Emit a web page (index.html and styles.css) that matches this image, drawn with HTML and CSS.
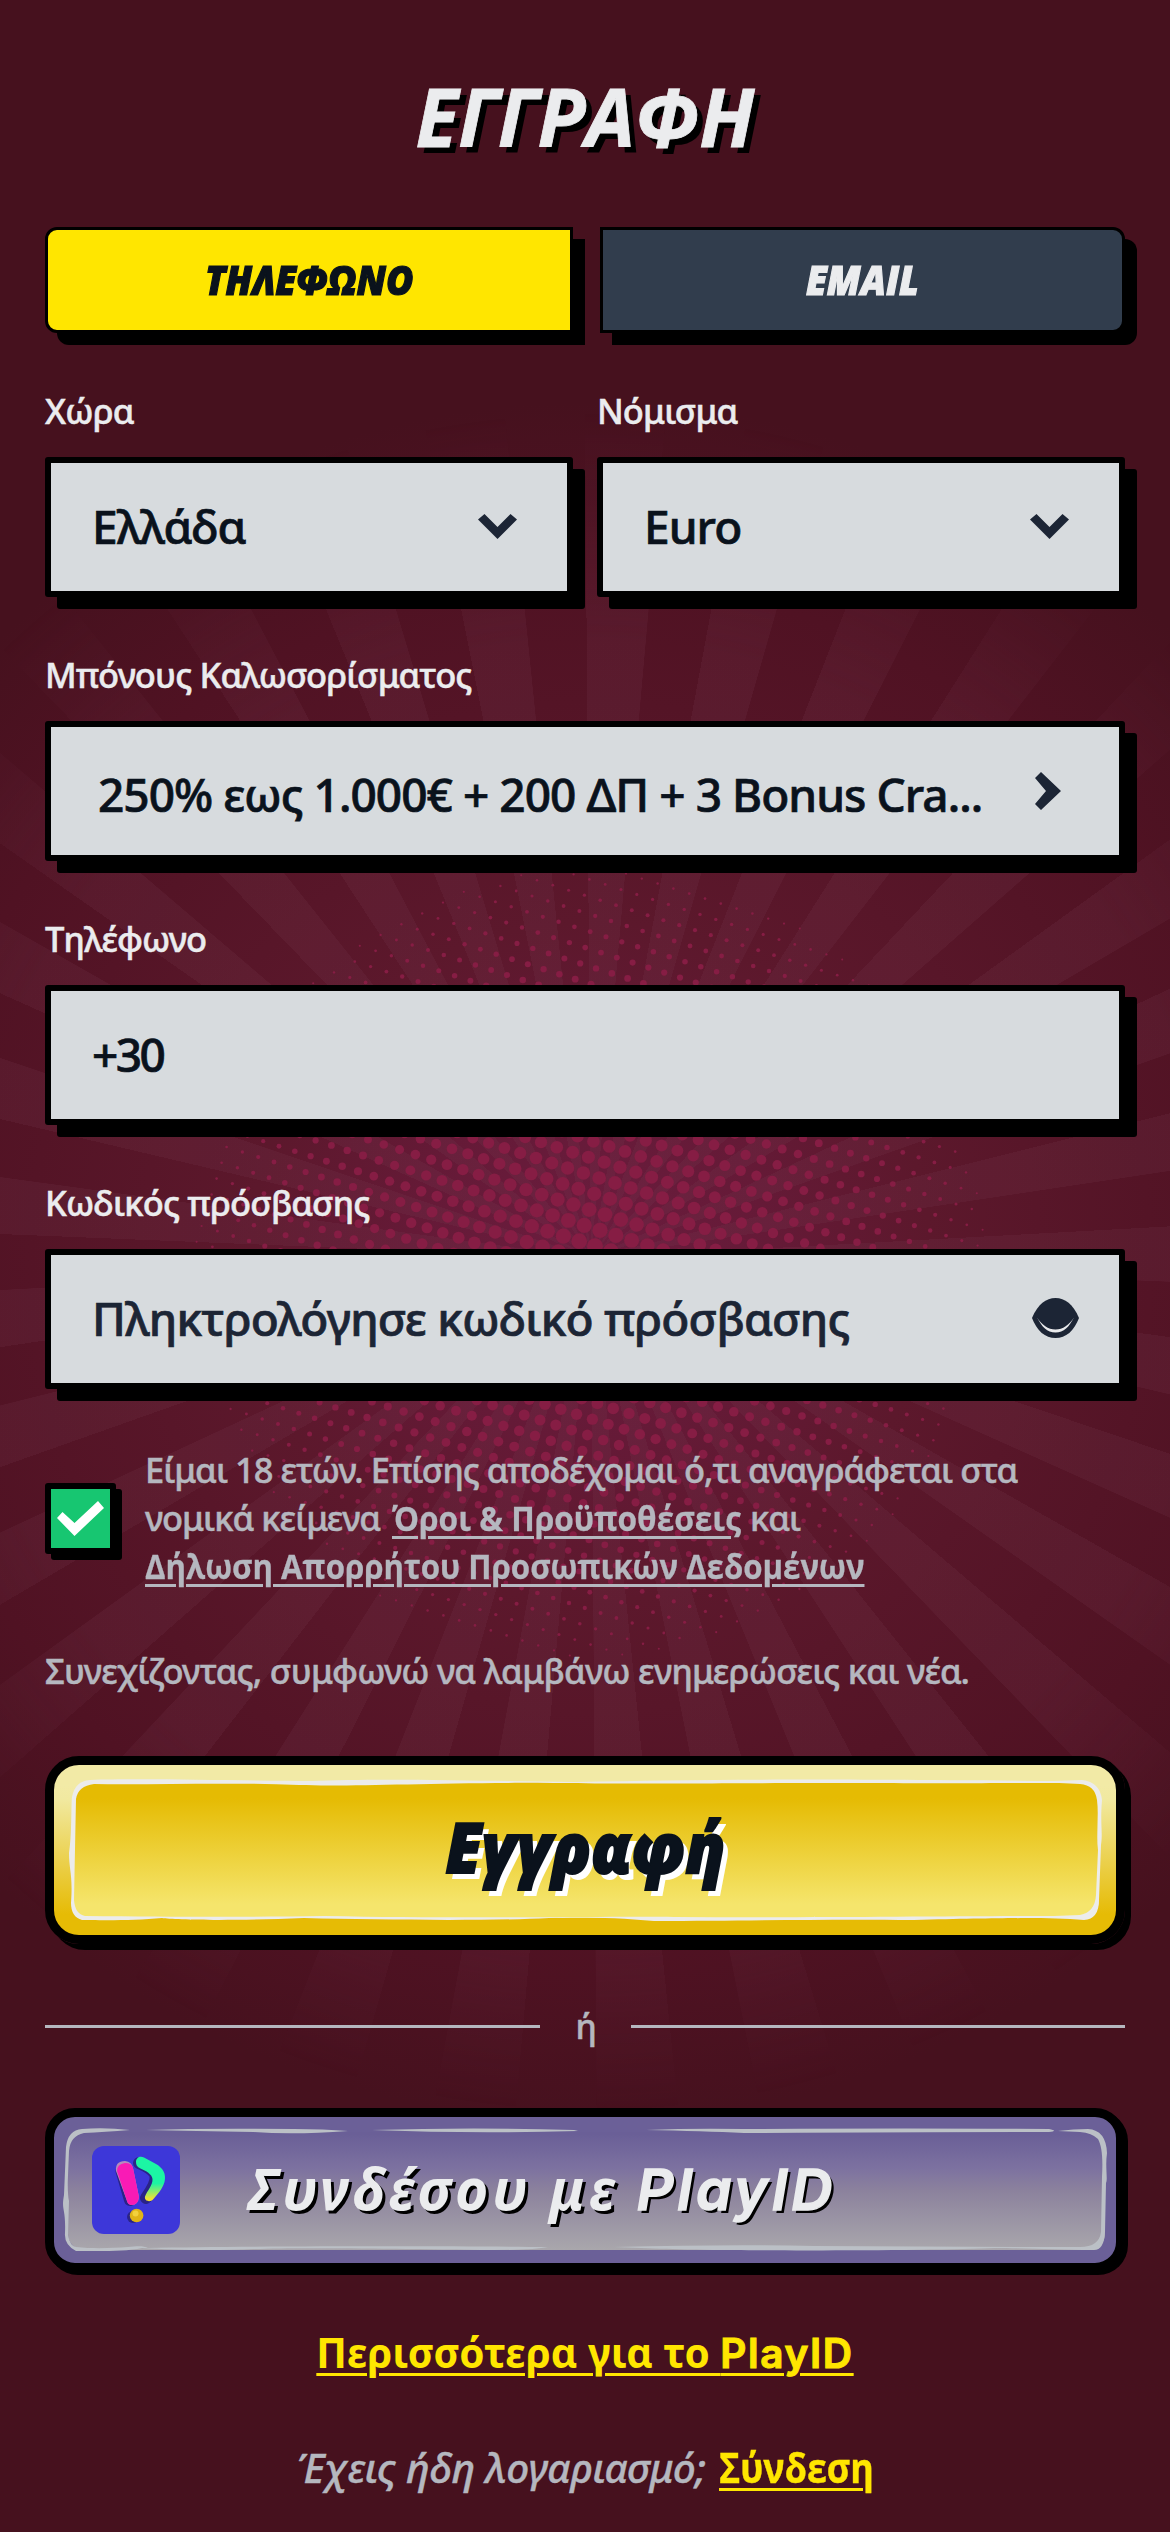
FILE: index.html
```html
<!DOCTYPE html>
<html lang="el">
<head>
<meta charset="utf-8">
<title>Εγγραφή</title>
<link rel="stylesheet" href="styles.css">
</head>
<body>
<div class="backdrop"><div class="rays"></div><svg class="dots" viewBox="-420 -420 840 840"></svg></div>
<main class="page">
  <h1 class="title">ΕΓΓΡΑΦΗ</h1>
  <div class="tabs">
    <button class="tab tab-active"><span class="tab-text">ΤΗΛΕΦΩΝΟ</span></button>
    <button class="tab"><span class="tab-text">EMAIL</span></button>
  </div>
  <div class="pair">
    <div class="field">
      <label class="label">Χώρα</label>
      <div class="box"><span>Ελλάδα</span>
        <svg class="chev-down" viewBox="0 0 39 25"><path d="M0 5.500 6.500 0 19.500 13 32.500 0 39 5.500 19.500 25Z"/></svg></div>
    </div>
    <div class="field">
      <label class="label">Νόμισμα</label>
      <div class="box"><span>Euro</span>
        <svg class="chev-down" viewBox="0 0 39 25"><path d="M0 5.500 6.500 0 19.500 13 32.500 0 39 5.500 19.500 25Z"/></svg></div>
    </div>
  </div>
  <div class="field">
    <label class="label">Μπόνους Καλωσορίσματος</label>
    <div class="box box-bonus"><span>250% εως 1.000€ + 200 ΔΠ + 3 Bonus Cra...</span>
      <svg class="chev-right" viewBox="0 0 26 38"><path d="M0 6 6 0 26 19 6 38 0 32 11 19Z"/></svg></div>
  </div>
  <div class="field">
    <label class="label">Τηλέφωνο</label>
    <div class="box"><span class="dial">+30</span></div>
  </div>
  <div class="field">
    <label class="label">Κωδικός πρόσβασης</label>
    <div class="box"><span class="placeholder">Πληκτρολόγησε κωδικό πρόσβασης</span>
      <svg class="eye" viewBox="0 0 47 40"><path d="M0 20C6 6 14 0 23.500 0S41 6 47 20C42 33 34 40 23.500 40S5 33 0 20Z"/><path class="lid" d="M5 19.500C10 29 15 34.500 23.500 34.500S37 29 42 19.500C37 27 31 31.500 23.500 31.500S10 27 5 19.500Z"/></svg></div>
  </div>
  <div class="terms">
    <div class="check"><svg viewBox="0 0 47 35"><path d="M0 17 5.500 11 17.500 22 41 0 47 7 17.500 35Z"/></svg></div>
    <p class="terms-text">Είμαι 18 ετών. Επίσης αποδέχομαι ό,τι αναγράφεται στα<br>νομικά κείμενα <a class="link link-terms">Όροι &amp; Προϋποθέσεις</a> και<br><a class="link">Δήλωση Απορρήτου Προσωπικών Δεδομένων</a></p>
  </div>
  <p class="consent">Συνεχίζοντας, συμφωνώ να λαμβάνω ενημερώσεις και νέα.</p>
  <button class="submit">
    <svg class="frame" viewBox="0 0 1062 170">
      <defs><linearGradient id="gold" x1="0" y1="0" x2="0" y2="1"><stop offset=".12" stop-color="#e5bb03"/><stop offset=".9" stop-color="#f5e56c"/></linearGradient></defs>
      <rect x="19" y="17" width="1026" height="136" rx="17" fill="url(#gold)"/>
      <path class="brush" fill-rule="evenodd" d="M36 15C90 13 190 16 258 16C330 13 430 16 520 17C660 14 740 14 1000 16L1028 15Q1046 17 1048 35C1046 60 1049 66 1047 80L1045 135Q1045 154 1030 155C990 152 950 153 860 155C760 154 690 156 600 156C560 152 520 152 495 153C440 156 330 155 250 153C180 156 120 155 108 153C80 156 40 155 28 155Q17 152 17 138C19 110 15 105 15 88C18 70 17 40 18 32Q21 16 36 15ZM40 19Q24 21 22 34L20 135Q21 149 31 151C130 152 200 152 270 151C420 154 560 151 620 152C760 153 900 151 1000 151L1026 150Q1041 147 1042 130L1044 85C1042 70 1045 50 1043 35Q1041 20 1026 19C990 17 950 19 830 18C640 18 560 19 500 18C380 17 300 22 245 20C170 17 100 20 40 19Z"/>
    </svg>
    <span class="submit-text">Εγγραφή</span>
  </button>
  <div class="divider"><i></i><span>ή</span><i></i></div>
  <button class="playid">
    <svg class="frame" viewBox="0 0 1062 146">
      <defs><linearGradient id="mist" x1="0" y1="0" x2="0" y2="1"><stop offset=".02" stop-color="#6a5f97"/><stop offset=".3" stop-color="#7c71a0"/><stop offset=".5" stop-color="#8c829d"/><stop offset="1" stop-color="#a9a7ac"/></linearGradient></defs>
      <rect x="14" y="15" width="1037" height="118" rx="16" fill="url(#mist)"/>
      <path class="brush" d="M28 12Q50 10 76 13Q50 15 30 16Q16 19 15 34C14 60 13 75 15 84L14 118Q16 129 22 130C40 132 60 131 74 130C84 129 90 129 94 131C200 129 400 129 494 130Q480 133 440 133C340 132 250 130 200 132C160 134 120 133 88 131C70 135 40 134 22 134Q10 128 11 116C12 90 7 94 10 78L12 30Q14 13 28 12Z"/>
      <path class="brush" d="M92 13Q150 11 240 12Q270 12 294 14Q240 18 200 15Q140 14 92 13ZM318 13Q420 10 520 13L524 14Q420 17 318 13ZM592 13Q640 11 690 12 860 11 995 12 1005 14 995 15 860 15 690 16 650 14 592 13ZM560 130Q680 127 760 129 900 130 1026 130 1045 130 1047 115L1048 60C1049 40 1048 30 1044 22Q1038 16 1026 15L1004 14Q1020 12 1034 12 1052 13 1053 36C1051 50 1054 62 1052 66L1051 115Q1050 133 1040 133C1000 133 980 131 940 131 900 133 760 134 680 133 620 133 600 131 560 130Z"/>
    </svg>
    <svg class="logo" viewBox="0 0 88 88">
      <defs><linearGradient id="leaf" x1="0" y1="0" x2="0" y2="1"><stop offset=".6" stop-color="#1cf5a4"/><stop offset=".95" stop-color="#f4e234"/></linearGradient></defs>
      <rect width="88" height="88" rx="12" fill="#3d37d9"/>
      <g class="shade" transform="translate(-3 1)"><path d="M32.500 24 41 53"/><path d="M50 16Q64 22 66.500 28 68 36 57 51"/><circle cx="44" cy="70" r="6"/></g>
      <path d="M24 25Q23 15 33 15 40 16 41 22L47 51Q46 59 40 59 36 59 35 55Z" fill="#b48bbd"/>
      <path d="M25 25Q25 18 33 17 40 17 41 22L47 51Q46 59 40 59 36 59 35 55Z" fill="#f91bb5"/>
      <path d="M44 16C44 11.500 48 9.500 52 11.500L64 18C71 22 74.500 28 72.500 36 70.500 43 65 49 61 53.500 58.500 56.500 52 55.500 53 50.500 55 45 61 39 60.500 33 60 28 54 25 48.500 22.500 45 21 44 19 44 16Z" fill="url(#leaf)"/>
      <circle cx="44.600" cy="69.500" r="6.800" fill="#e0b417"/><circle cx="43.500" cy="67.500" r="3" fill="#f2d13c"/>
    </svg>
    <span class="playid-text">Συνδέσου με <b>PlayID</b></span>
  </button>
  <p class="more"><a>Περισσότερα για το <b>PlayID</b></a></p>
  <p class="login"><em>Έχεις ήδη λογαριασμό;</em> <a>Σύνδεση</a></p>
</main>
<script src="dots.js"></script>
</body>
</html>
```
FILE: styles.css
```css
* { box-sizing: border-box; }
body { margin: 0; background: #46111e; font-family: "Noto Sans", sans-serif; font-weight: 500; }
h1, p { margin: 0; }
button { padding: 0; color: inherit; font: inherit; }

.backdrop { position: absolute; z-index: -1; left: 0; top: 0; width: 1170px; height: 2532px; overflow: hidden;
  background: radial-gradient(circle at 590px 1262px, #6b1d3f 0, #651a37 180px, #5c182c 340px, #541426 560px, #501223 680px, #46111e 860px); }
.rays { position: absolute; inset: 0;
  background: repeating-conic-gradient(from -0.4deg at 591px 1258px, rgba(122, 62, 84, .18) 0 5.4545deg, transparent 5.5deg 10.909deg);
  -webkit-mask-image: radial-gradient(circle at 590px 1262px, #000 620px, transparent 850px);
  mask-image: radial-gradient(circle at 590px 1262px, #000 620px, transparent 850px); }
.dots { position: absolute; left: 170px; top: 842px; width: 840px; height: 840px; fill: #861d44; }

.page { width: 1170px; height: 2532px; padding: 66px 45px 0; color: #ebecee; }
.title { height: 100px; font: italic 700 80px/100px "Open Sans", sans-serif; text-align: center; text-shadow: 6px 6px 0 #000; transform: scaleX(.985); -webkit-text-stroke: .8px currentColor; }

.tabs { display: grid; grid-template-columns: 528px 525px; justify-content: space-between; margin-top: 61px; }
.tab { height: 106px; border: 3px solid #000; border-radius: 0 12px 12px 0; background: #313d4d; color: #ebecee; box-shadow: 12px 12px 0 #000; font: italic 800 40.5px/100px "Open Sans", sans-serif; }
.tab-active { border-radius: 12px 0 0 12px; background: #ffe600; color: #0a121c; }
.tab-text { display: inline-block; transform: scaleX(.92); -webkit-text-stroke: 1.2px currentColor; }

.pair { display: grid; grid-template-columns: 528px 528px; justify-content: space-between; }
.field { margin-top: 54px; }
.label { display: block; margin-bottom: 22px; font-size: 34.5px; line-height: 48px; letter-spacing: -.85px; white-space: nowrap; -webkit-text-stroke: .5px currentColor; }
.box { display: flex; align-items: center; justify-content: space-between; height: 140px; padding: 0 50px 2px 41px; border: 6px solid #000; border-radius: 3px; background: #d7dbde; box-shadow: 12px 12px 0 #000; font-size: 46px; letter-spacing: -.95px; white-space: nowrap; color: #0a121c; -webkit-text-stroke: .7px currentColor; }
.box-bonus { padding: 5px 58px 0 47px; }
.dial { letter-spacing: -2.5px; }
.placeholder { color: #1c2535; letter-spacing: -.85px; }
.box svg { fill: #1c2535; }
.chev-down { width: 39px; height: 25px; }
.chev-right { width: 26px; height: 38px; margin-top: -5px; }
.eye { width: 47px; height: 40px; margin-right: -10px; }
.box .lid { fill: #e9eaec; }

.terms { display: flex; align-items: center; gap: 29px; margin-top: 57px; color: #b5b7bf; }
.check { display: flex; align-items: center; justify-content: center; width: 71px; height: 71px; border: 6px solid #000; border-radius: 3px; background: #17c671; box-shadow: 6px 6px 0 #000; }
.check svg { width: 47px; height: 35px; fill: #fff; }
.terms-text, .consent { font-size: 34.5px; line-height: 48px; letter-spacing: -1px; white-space: nowrap; -webkit-text-stroke: .5px currentColor; }
.link { display: inline-block; font-family: "Open Sans", sans-serif; font-weight: 700; line-height: 47px; letter-spacing: 0; vertical-align: top; transform: scaleX(.904); transform-origin: left; -webkit-text-stroke: .3px; }
.link-terms { margin: 0 -31px 0 4px; transform: scaleX(.916); }
.link, .more a, .login a { text-decoration: underline; text-decoration-thickness: 3px; text-underline-offset: 5px; }
.consent { margin-top: 57px; letter-spacing: -.72px; color: #b5b7bf; }

.submit, .playid { position: relative; display: flex; align-items: center; width: 1080px; border: 9px solid #000; }
.frame { position: absolute; left: 0; top: 0; width: 100%; height: 100%; }
.brush { fill: #ececec; }
.submit { justify-content: center; height: 188px; margin-top: 61px; border-radius: 34px; background: linear-gradient(#f2eaa6 0 12%, #f1e9a0 20%, #e6bb05 88%); box-shadow: 6px 6px 0 #000; color: #0a121c; }
.submit-text { position: relative; margin-bottom: 9px; font: italic 800 69px/90px "Open Sans", sans-serif; text-shadow: 6px 6px 0 #fff; transform: scaleX(.93); -webkit-text-stroke: 2px currentColor; }

.divider { display: flex; align-items: center; gap: 36px; height: 48px; margin-top: 58px; color: #b5b7bf; font-size: 34.5px; line-height: 44px; -webkit-text-stroke: .5px currentColor; }
.divider i { flex: 1; height: 3px; background: #b5b7bf; }
.divider span { width: 19px; text-align: center; }

.playid { height: 164px; margin-top: 58px; padding-left: 38px; border-radius: 30px; background: #6b6098; box-shadow: 3px 3px 0 #000; }
.playid .brush { fill: #bbc0c6; }
.logo { position: relative; width: 88px; height: 88px; }
.shade { fill: #241d6e; stroke: #241d6e; stroke-width: 12; stroke-linecap: round; opacity: .75; }
.shade path { fill: none; }
.shade circle { stroke: none; }
.playid-text { position: relative; margin: 0 0 4px 68px; font-size: 57px; font-style: italic; font-weight: 700; letter-spacing: 3.7px; text-shadow: 3px 3px 0 #000; white-space: nowrap; }
.playid-text b, .more b { font-family: Inter, sans-serif; font-weight: 600; -webkit-text-stroke: 1.5px currentColor; }
.more { margin-top: 53px; text-align: center; font-size: 40.5px; font-weight: 700; line-height: 56px; letter-spacing: 0; color: #ffe600; }
.more b { letter-spacing: 1.6px; -webkit-text-stroke-width: 1.1px; }
.login { margin-top: 58px; text-align: center; font-size: 40.5px; line-height: 56px; letter-spacing: -.4px; color: #b5b7bf; -webkit-text-stroke: .4px currentColor; }
.login a { display: inline-block; margin: 0 -20px 0 3px; color: #ffe600; font-family: "Open Sans", sans-serif; font-weight: 700; letter-spacing: 0; transform: scaleX(.885); transform-origin: left; }
```
FILE: dots.js
```
// Halftone burst: a tilted square lattice whose dots shrink away from the centre.
const svg = document.querySelector('.dots');
const [ux, uy] = [15.8, 5];
let marks = '';
for (let i = -30; i <= 30; i++) {
  for (let j = -30; j <= 30; j++) {
    const x = i * ux - j * uy, y = i * uy + j * ux;
    const d = Math.hypot(x, y);
    if (d > 395) continue;
    const r = 8.2 * Math.pow(1 - d / 425, 0.8);
    marks += `<circle cx="${x.toFixed(1)}" cy="${y.toFixed(1)}" r="${r.toFixed(2)}"/>`;
  }
}
svg.innerHTML = marks;
```
